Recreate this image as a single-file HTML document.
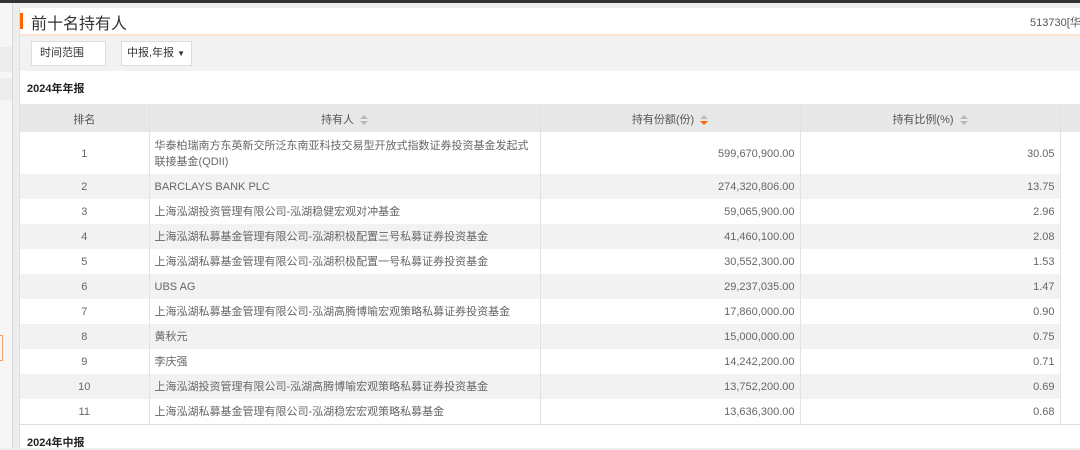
<!DOCTYPE html><html><head><meta charset="utf-8"><style>
*{margin:0;padding:0;box-sizing:border-box}
body{width:1080px;height:448px;overflow:hidden;background:#eee;font-family:"Liberation Sans","Noto Sans CJK SC",sans-serif;position:relative;color:#666;font-size:11px}
.a{position:absolute}
table{border-collapse:collapse;position:absolute;left:20px;top:104px;width:1080px;table-layout:fixed}
td,th{border-right:1px solid #e2e2e2;height:25px;font-size:11px;color:#666;font-weight:normal;vertical-align:middle;padding-top:1px}
th{background:#e8e8e8;height:28px;color:#555}
tr.g td{background:#f2f2f2}
td{background:#fff}
td.c{text-align:center}td.l{padding-left:5px;padding-right:2px;line-height:16px;white-space:nowrap;overflow:hidden}td.r{text-align:right;padding-right:5px}
.s{display:inline-block;width:8px;height:10px;vertical-align:middle;margin-left:6px;position:relative}
.s:before{content:"";position:absolute;left:0;top:0;border:4px solid transparent;border-bottom:4px solid #bbb;border-top:0}
.s:after{content:"";position:absolute;left:0;top:6px;border:4px solid transparent;border-top:4px solid #bbb;border-bottom:0}
.s.o:after{border-top-color:#f60}
</style></head><body>
<div class="a" style="left:0;top:0;width:1080px;height:3px;background:#333"></div>
<div class="a" style="left:0;top:3px;width:12px;height:445px;background:#f6f6f6"></div>
<div class="a" style="left:0;top:47px;width:12px;height:25px;background:#ececec"></div>
<div class="a" style="left:0;top:78px;width:12px;height:22px;background:#ececec"></div>
<div class="a" style="left:0;top:335px;width:3px;height:26px;border:1px solid #f0a070;border-left:0"></div>
<div class="a" style="left:12px;top:3px;width:1px;height:445px;background:#d8d8d8"></div>
<div class="a" style="left:19px;top:8px;width:1061px;height:440px;background:#fff;border-left:1px solid #ddd"></div>
<div class="a" style="left:20px;top:13px;width:3px;height:16px;background:#f60"></div>
<div class="a" style="left:31px;top:10px;font-size:16px;color:#333">前十名持有人</div>
<div class="a" style="left:1030px;top:14px;font-size:11px;color:#555;white-space:nowrap">513730[华</div>
<div class="a" style="left:20px;top:34px;width:1060px;height:2px;background:#fde3d3"></div>
<div class="a" style="left:20px;top:36px;width:1060px;height:35px;background:#f2f2f2"></div>
<div class="a" style="left:31px;top:41px;width:75px;height:25px;background:#fff;border:1px solid #ddd;line-height:23px;padding-left:8px;color:#333">时间范围</div>
<div class="a" style="left:121px;top:41px;width:71px;height:25px;background:#fff;border:1px solid #ddd;line-height:23px;padding-left:5px;color:#333">中报,年报 <span style="font-size:8px">▼</span></div>
<div class="a" style="left:27px;top:80px;font-weight:bold;color:#222;font-size:11px">2024年年报</div>
<table>
<colgroup><col style="width:129px"><col style="width:391px"><col style="width:260px"><col style="width:260px"><col></colgroup>
<tr><th>排名</th><th>持有人<span class="s"></span></th><th>持有份额(份)<span class="s o"></span></th><th>持有比例(%)<span class="s"></span></th><th></th></tr>
<tr style="height:42px"><td class="c" style="height:42px">1</td><td class="l">华泰柏瑞南方东英新交所泛东南亚科技交易型开放式指数证券投资基金发起式<br>联接基金(QDII)</td><td class="r">599,670,900.00</td><td class="r">30.05</td><td></td></tr>
<tr class="g"><td class="c">2</td><td class="l">BARCLAYS BANK PLC</td><td class="r">274,320,806.00</td><td class="r">13.75</td><td style="background:#fff"></td></tr>
<tr><td class="c">3</td><td class="l">上海泓湖投资管理有限公司-泓湖稳健宏观对冲基金</td><td class="r">59,065,900.00</td><td class="r">2.96</td><td></td></tr>
<tr class="g"><td class="c">4</td><td class="l">上海泓湖私募基金管理有限公司-泓湖积极配置三号私募证券投资基金</td><td class="r">41,460,100.00</td><td class="r">2.08</td><td style="background:#fff"></td></tr>
<tr><td class="c">5</td><td class="l">上海泓湖私募基金管理有限公司-泓湖积极配置一号私募证券投资基金</td><td class="r">30,552,300.00</td><td class="r">1.53</td><td></td></tr>
<tr class="g"><td class="c">6</td><td class="l">UBS AG</td><td class="r">29,237,035.00</td><td class="r">1.47</td><td style="background:#fff"></td></tr>
<tr><td class="c">7</td><td class="l">上海泓湖私募基金管理有限公司-泓湖高腾博喻宏观策略私募证券投资基金</td><td class="r">17,860,000.00</td><td class="r">0.90</td><td></td></tr>
<tr class="g"><td class="c">8</td><td class="l">黄秋元</td><td class="r">15,000,000.00</td><td class="r">0.75</td><td style="background:#fff"></td></tr>
<tr><td class="c">9</td><td class="l">李庆强</td><td class="r">14,242,200.00</td><td class="r">0.71</td><td></td></tr>
<tr class="g"><td class="c">10</td><td class="l">上海泓湖投资管理有限公司-泓湖高腾博喻宏观策略私募证券投资基金</td><td class="r">13,752,200.00</td><td class="r">0.69</td><td style="background:#fff"></td></tr>
<tr><td class="c">11</td><td class="l">上海泓湖私募基金管理有限公司-泓湖稳宏宏观策略私募基金</td><td class="r">13,636,300.00</td><td class="r">0.68</td><td></td></tr>
</table>
<div class="a" style="left:20px;top:424px;width:1060px;height:1px;background:#ddd"></div>
<div class="a" style="left:27px;top:434px;font-weight:bold;color:#222;font-size:11px">2024年中报</div>
</body></html>
